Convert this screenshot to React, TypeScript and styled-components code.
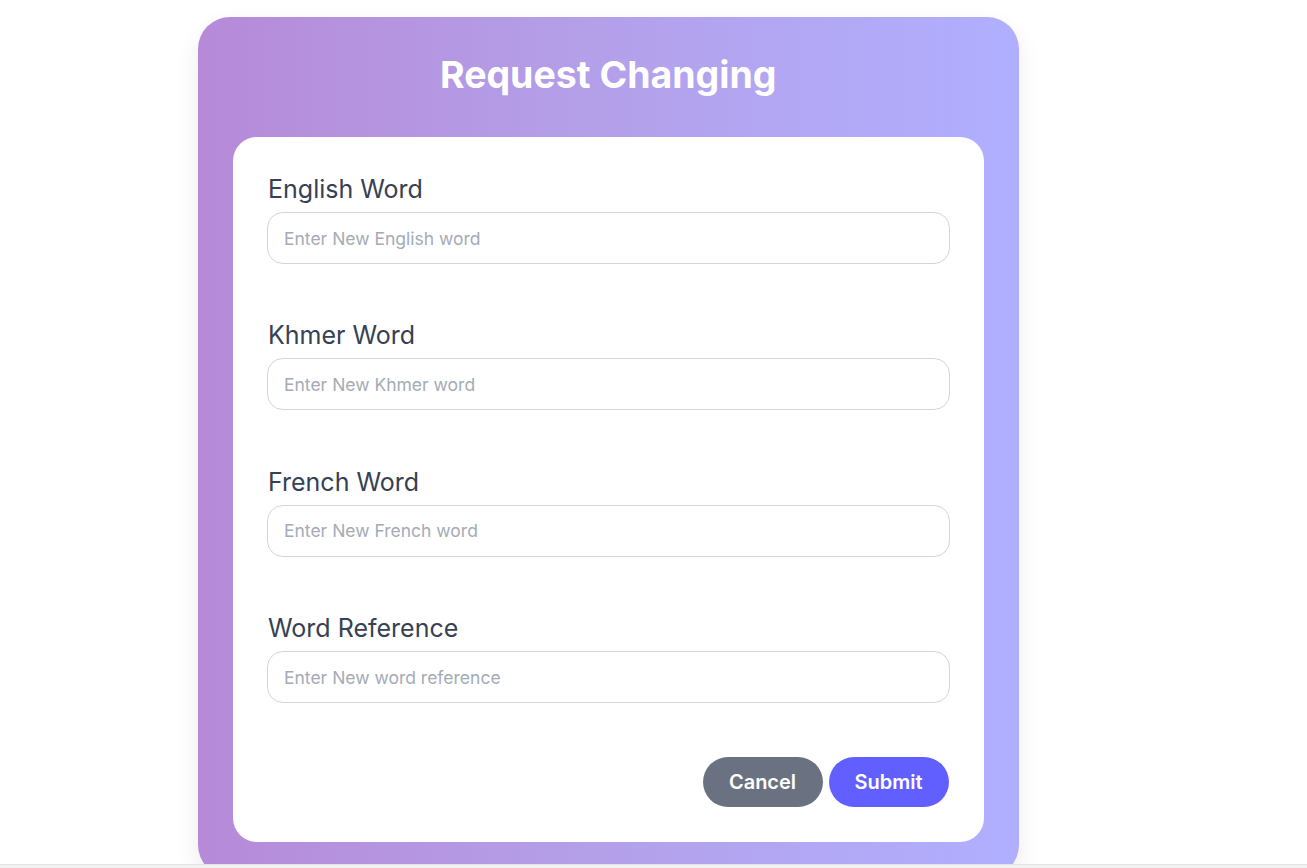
import React from "react";
import styled, { createGlobalStyle } from "styled-components";

const Global = createGlobalStyle`
  html, body {
    margin: 0;
    padding: 0;
    overflow: hidden;
    background: #ffffff;
    font-family: Inter, "Noto Sans", "Liberation Sans", sans-serif;
  }
  * { box-sizing: border-box; }
`;

const Page = styled.div`
  height: 868px;
  padding: 17px 0 0 198px;
  display: flex;
  align-items: flex-start;
`;

const Card = styled.div`
  width: 820.5px;
  padding: 35px;
  border-radius: 32px;
  background: linear-gradient(90deg, #b68ad8 0%, #b4a0ea 50%, #b0afff 100%);
  box-shadow: 0 10px 25px rgba(0, 0, 0, 0.08);
  display: flex;
  flex-direction: column;
`;

const Title = styled.h1`
  margin: 3px 0 42px;
  font-size: 37.5px;
  line-height: 40px;
  font-weight: 700;
  color: #ffffff;
  text-align: center;
`;

const Panel = styled.form`
  background: #ffffff;
  border-radius: 24px;
  padding: 36px 34px 35px;
  display: flex;
  flex-direction: column;
  gap: 55.45px;
`;

const Field = styled.div`
  display: flex;
  flex-direction: column;
  gap: 7px;
`;

const Label = styled.label`
  font-size: 25px;
  line-height: 32px;
  font-weight: 400;
  color: #364153;
  padding-left: 1px;
`;

const Input = styled.input`
  height: 52px;
  width: 100%;
  border: 1px solid #d1d5dc;
  border-radius: 16px;
  padding: 0 16px;
  font-family: inherit;
  font-size: 17.5px;
  color: #364153;
  outline: none;
  background: #fff;
  &::placeholder { color: #a4abb6; }
`;

const Actions = styled.div`
  display: flex;
  justify-content: flex-end;
  gap: 6px;
  margin-top: -2px;
  padding-right: 1px;
`;

const Button = styled.button<{ $tone: "gray" | "indigo" }>`
  width: 120px;
  height: 50px;
  border: none;
  border-radius: 999px;
  background: ${(p) => (p.$tone === "gray" ? "#6a7282" : "#615fff")};
  color: #ffffff;
  font-family: inherit;
  font-size: 20px;
  font-weight: 600;
  cursor: pointer;
`;

const BottomBar = styled.div`
  position: fixed;
  left: 0;
  right: 0;
  bottom: 0;
  height: 4px;
  background: #f1f1f1;
  border-top: 1px solid #e2e2e2;
`;

const fields = [
  { label: "English Word", placeholder: "Enter New English word" },
  { label: "Khmer Word", placeholder: "Enter New Khmer word" },
  { label: "French Word", placeholder: "Enter New French word" },
  { label: "Word Reference", placeholder: "Enter New word reference" },
];

export default function App() {
  return (
    <>
      <Global />
      <Page>
        <Card>
          <Title>Request Changing</Title>
          <Panel onSubmit={(e) => e.preventDefault()}>
            {fields.map((f) => (
              <Field key={f.label}>
                <Label>{f.label}</Label>
                <Input placeholder={f.placeholder} />
              </Field>
            ))}
            <Actions>
              <Button type="button" $tone="gray">Cancel</Button>
              <Button type="submit" $tone="indigo">Submit</Button>
            </Actions>
          </Panel>
        </Card>
      </Page>
      <BottomBar />
    </>
  );
}
